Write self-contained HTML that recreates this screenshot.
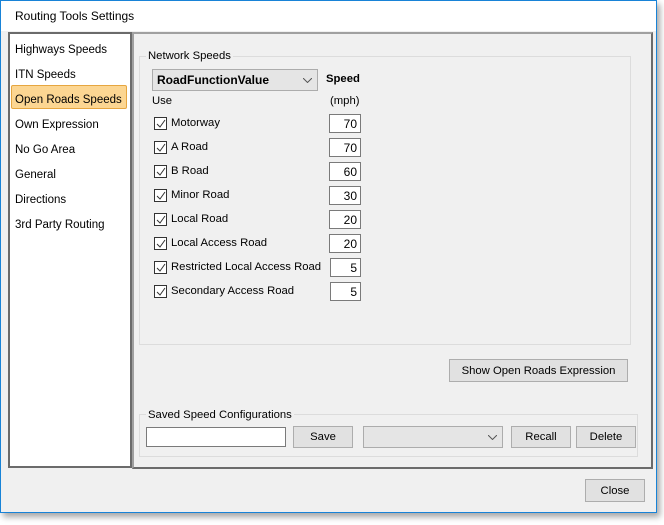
<!DOCTYPE html><html><head><style>
body{margin:0;width:664px;height:525px;background:#fff;font-family:"Liberation Sans",sans-serif;font-size:11.3px;color:#000;position:relative;overflow:hidden}
.a{position:absolute}
.win{left:0;top:0;width:655px;height:511px;border:1px solid #1883d7;background:#f0f0f0;box-shadow:3px 4px 6px rgba(0,0,0,.35)}
.title{left:1px;top:1px;width:655px;height:30px;background:#fff}
.btn{position:absolute;background:#e1e1e1;border:1px solid #adadad;text-align:center;box-sizing:border-box}
.cb{position:absolute;width:13px;height:13px;border:1px solid #333;box-sizing:border-box;background:#fff}
.cb svg{position:absolute;left:1px;top:1px}
.tb{position:absolute;width:32px;height:19px;background:#fff;border:1px solid #7a7a7a;box-sizing:border-box;text-align:right;padding-right:3px;line-height:18px;font-size:12px}
.gb{position:absolute;border:1px solid #dcdcdc}
.lbl{position:absolute;background:#f0f0f0;padding:0 2px}
</style></head><body>
<div class="a win"></div>
<div class="a title"></div>
<div class="a" style="left:15px;top:9px;font-size:12px">Routing Tools Settings</div>
<div class="a" style="left:8px;top:32px;width:120px;height:432px;background:#fff;border:2px solid #6b6b6b"></div>
<div class="a" style="left:11px;top:85px;width:116px;height:24px;background:#fcd692;border:1px solid #e6a640;box-sizing:border-box;border-radius:2px"></div>
<div class="a" style="left:15px;top:38px;line-height:25px;font-size:11.5px">Highways Speeds<br>ITN Speeds<br>Open Roads Speeds<br>Own Expression<br>No Go Area<br>General<br>Directions<br>3rd Party Routing</div>
<div class="a" style="left:132px;top:32px;width:517px;height:433px;border:2px solid #6b6b6b;border-left-color:#a0a0a0;border-top-color:#a0a0a0"></div>
<div class="gb" style="left:139px;top:56px;width:490px;height:287px"></div>
<div class="lbl" style="left:146px;top:50px">Network Speeds</div>
<div class="a" style="left:152px;top:69px;width:166px;height:22px;background:#e5e5e5;border:1px solid #acacac;box-sizing:border-box;font-weight:bold;font-size:12px;line-height:21px;padding-left:4px">RoadFunctionValue<svg class="a" style="right:5px;top:8px" width="9" height="5"><path d="M0 0L4.5 4.5L9 0" fill="none" stroke="#555"/></svg></div>
<div class="a" style="left:326px;top:73px;font-weight:bold">Speed</div>
<div class="a" style="left:152px;top:95px">Use</div>
<div class="a" style="left:330px;top:95px">(mph)</div>
<div id="rows"></div>
<div class="btn" style="left:449px;top:359px;width:179px;height:23px;line-height:22px">Show Open Roads Expression</div>
<div class="gb" style="left:139px;top:414px;width:497px;height:41px"></div>
<div class="lbl" style="left:146px;top:409px">Saved Speed Configurations</div>
<div class="a" style="left:146px;top:427px;width:140px;height:20px;background:#fff;border:1px solid #7a7a7a;box-sizing:border-box"></div>
<div class="btn" style="left:293px;top:426px;width:60px;height:22px;line-height:21px">Save</div>
<div class="a" style="left:363px;top:426px;width:140px;height:22px;background:#e5e5e5;border:1px solid #acacac;box-sizing:border-box"><svg class="a" style="right:5px;top:8px" width="9" height="5"><path d="M0 0L4.5 4.5L9 0" fill="none" stroke="#555"/></svg></div>
<div class="btn" style="left:511px;top:426px;width:60px;height:22px;line-height:21px">Recall</div>
<div class="btn" style="left:576px;top:426px;width:60px;height:22px;line-height:21px">Delete</div>
<div class="btn" style="left:585px;top:479px;width:60px;height:23px;line-height:22px">Close</div>
<script>
var r=[["Motorway",70],["A Road",70],["B Road",60],["Minor Road",30],["Local Road",20],["Local Access Road",20],["Restricted Local Access Road",5],["Secondary Access Road",5]],h="";
r.forEach(function(x,i){var y=114+i*24;var s=x[1]<10;
h+='<div class="cb" style="left:154px;top:'+(y+3)+'px"><svg width="10" height="10"><path d="M1 5L4 8L9 1" fill="none" stroke="#333" stroke-width="1"/></svg></div>';
h+='<div class="a" style="left:171px;top:'+(y+3)+'px">'+x[0]+'</div>';
h+='<div class="tb" style="'+(s?'left:330px;width:31px':'left:329px')+';top:'+y+'px">'+x[1]+'</div>';});
document.getElementById("rows").innerHTML=h;
</script>
</body></html>
